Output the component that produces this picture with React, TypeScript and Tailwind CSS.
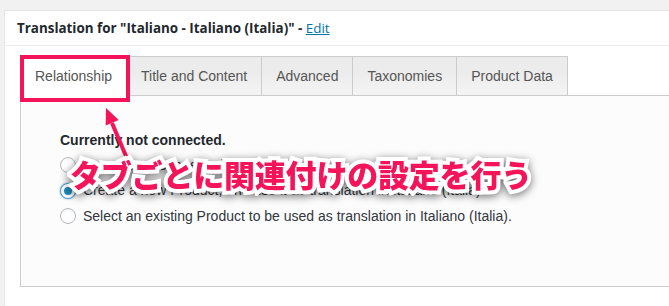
const tabs = ['Relationship', 'Title and Content', 'Advanced', 'Taxonomies', 'Product Data'];

const options = [
  { label: 'Leave it not connected.', checked: false },
  { label: 'Create a new Product, and use it as translation in Italiano (Italia).', checked: true },
  { label: 'Select an existing Product to be used as translation in Italiano (Italia).', checked: false },
];

function Radio({ checked }: { checked: boolean }) {
  return checked ? (
    <span className="flex h-4 w-4 shrink-0 items-center justify-center rounded-full border border-[#5b9dd9] bg-white shadow-[0_0_2px_rgba(30,140,190,0.8)]">
      <span className="h-2 w-2 rounded-full bg-[#1e8cbe]" />
    </span>
  ) : (
    <span className="h-4 w-4 shrink-0 rounded-full border border-[#b4b9be] bg-white shadow-[inset_0_1px_2px_rgba(0,0,0,0.07)]" />
  );
}

export default function App() {
  return (
    <div className="relative h-[306px] w-[669px] overflow-hidden bg-[#f1f1f1] pl-[4px] pt-[10px] font-['Liberation_Sans',Arial,sans-serif]">
      <div className="h-full w-[720px] border-l border-t border-[#e5e5e5] bg-white">
        {/* header */}
        <div className="flex h-[35px] items-center border-b border-[#eee] pl-[12px] font-['Open_Sans',sans-serif] text-[13.4px] text-[#23282d]">
          <span className="font-bold">Translation for "Italiano - Italiano (Italia)" -&nbsp;</span>
          <span className="text-[#0073aa] underline">Edit</span>
        </div>

        {/* tabs + panel */}
        <div className="pl-[15px] pt-[10px]">
          <div className="flex">
            {tabs.map((t, i) => (
              <div
                key={t}
                className={
                  i === 0
                    ? 'relative z-10 -mb-px flex h-[40px] items-center border border-b-0 border-[#ccc] bg-white px-[14px] text-[14px] text-[#555]'
                    : 'flex h-[39px] items-center border border-b-0 border-l-0 border-[#ccc] bg-gradient-to-b from-[#ececec] from-40% to-[#f4f4f4] px-[14px] text-[14px] text-[#555]'
                }
              >
                {t}
              </div>
            ))}
          </div>
          <div className="h-[192px] border border-[#ccc] bg-[#fcfcfc] pl-[39px] pt-[34px] text-[14px] text-[#32373c]">
            <div className="h-5 font-bold leading-5 text-[#23282d]">Currently not connected.</div>
            <div className="mt-[2.5px] flex flex-col">
              {options.map((o) => (
                <label key={o.label} className="flex h-[25.5px] items-center gap-[7px]">
                  <Radio checked={o.checked} />
                  <span>{o.label}</span>
                </label>
              ))}
            </div>
          </div>
        </div>
      </div>

      {/* annotation: highlight box */}
      <div className="absolute left-[20px] top-[55px] z-20 h-[47px] w-[110px] border-4 border-[#f5145a] shadow-[0_0_1px_rgba(255,255,255,0.9)]" />

      {/* annotation: arrow */}
      <svg className="pointer-events-none absolute left-0 top-0 z-20" width="669" height="306" viewBox="0 0 669 306">
        <line x1="131" y1="168" x2="112" y2="123" stroke="#f5145a" strokeWidth="4" />
        <polygon points="106,108 118.7,120.1 105.7,125.5" fill="#f5145a" />
      </svg>

      {/* annotation: caption */}
      <div className="absolute left-[70px] top-[158px] z-30 whitespace-nowrap font-['Noto_Sans_CJK_JP',sans-serif] text-[31px] font-black leading-none tracking-[-0.2px] text-[#f5145a] [-webkit-text-stroke:8px_white] [paint-order:stroke_fill] drop-shadow-[0_2px_4px_rgba(0,0,0,0.55)]">
        タブごとに関連付けの設定を行う
      </div>
    </div>
  );
}
